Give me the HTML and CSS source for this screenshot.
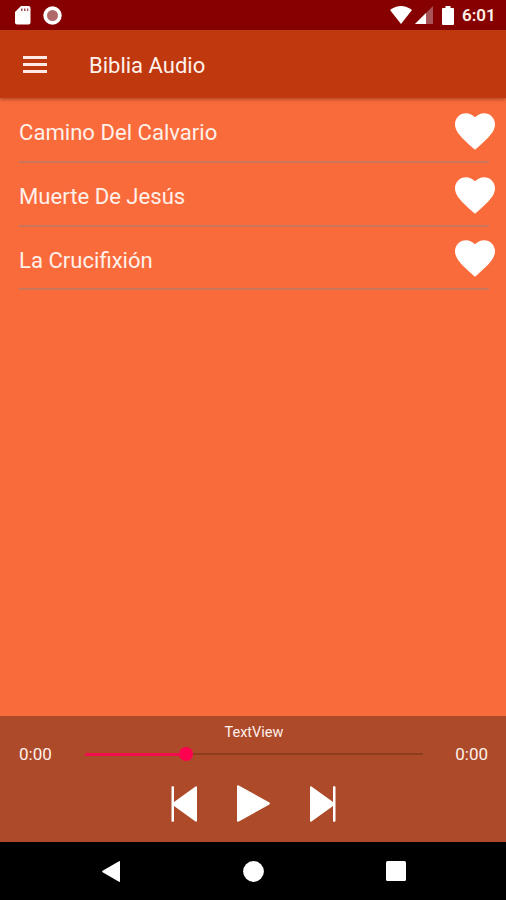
FILE: index.html
```
<!DOCTYPE html>
<html lang="es">
<head>
    <meta charset="UTF-8">
    <meta name="viewport" content="width=device-width, initial-scale=1.0">
    <title>Biblia Audio</title>
    <link rel="stylesheet" href="styles.css">
</head>

<body>
    <div class="status-bar">
        <svg class="sd-card" width="16" height="19" viewBox="0 0 16 19">
            <path fill="#fff" d="M6 0h7.500q2 0 2 2v14.500q0 2-2 2H2q-2 0-2-2V6z"/>
            <path fill="#a04a4a" d="M6 2.500h1.500v2.500H6zM9 2.500h1.500v2.500H9zM12 2.500h1.300v2.500H12z"/>
        </svg>
        <svg class="record" width="19" height="19" viewBox="0 0 19 19">
            <circle cx="9.500" cy="9.500" r="9.200" fill="#fff"/>
            <circle cx="9.500" cy="9.500" r="5.500" fill="#b0686b"/>
        </svg>
        <svg class="wifi" width="22" height="18" viewBox="0 0 22 18">
            <path fill="#fff" d="M0 4Q11-4 22 4L11 18z"/>
        </svg>
        <svg class="signal" width="18" height="18" viewBox="0 0 18 18">
            <path fill="#a85458" d="M18 0v18H0z"/>
            <path fill="#fff" d="M11 7v11H0z"/>
        </svg>
        <svg class="battery" width="12" height="19" viewBox="0 0 12 19">
            <path fill="#fff" d="M3.500 0h5v2H11q1 0 1 1v15q0 1-1 1H1q-1 0-1-1V3q0-1 1-1h2.500z"/>
        </svg>
        <span class="clock">6:01</span>
    </div>

    <header class="toolbar">
        <button class="menu">
            <svg width="24" height="17" viewBox="0 0 24 17">
                <path fill="#ffe9e4" d="M0 0h24v3H0zM0 7h24v3H0zM0 14h24v3H0z"/>
            </svg>
        </button>
        <h1 class="title">Biblia Audio</h1>
    </header>

    <main class="list">
        <div class="song">
            <span class="name">Camino Del Calvario</span>
            <svg class="heart" viewBox="2 3 20 18.35"><path d="M12 21.350l-1.450-1.320C5.400 15.360 2 12.280 2 8.500 2 5.420 4.420 3 7.500 3c1.740 0 3.410.81 4.500 2.090C13.090 3.810 14.760 3 16.500 3 19.580 3 22 5.420 22 8.500c0 3.780-3.400 6.860-8.550 11.540z"/></svg>
        </div>
        <div class="song">
            <span class="name">Muerte De Jesús</span>
            <svg class="heart" viewBox="2 3 20 18.35"><path d="M12 21.350l-1.450-1.320C5.400 15.360 2 12.280 2 8.500 2 5.420 4.420 3 7.500 3c1.740 0 3.410.81 4.500 2.090C13.090 3.810 14.760 3 16.500 3 19.580 3 22 5.420 22 8.500c0 3.780-3.400 6.860-8.550 11.540z"/></svg>
        </div>
        <div class="song">
            <span class="name">La Crucifixión</span>
            <svg class="heart" viewBox="2 3 20 18.35"><path d="M12 21.350l-1.450-1.320C5.400 15.360 2 12.280 2 8.500 2 5.420 4.420 3 7.500 3c1.740 0 3.410.81 4.500 2.090C13.090 3.810 14.760 3 16.500 3 19.580 3 22 5.420 22 8.500c0 3.780-3.400 6.860-8.550 11.540z"/></svg>
        </div>
    </main>

    <section class="player">
        <div class="track-name">TextView</div>
        <div class="progress">
            <span class="time">0:00</span>
            <div class="seekbar">
                <div class="played"></div>
                <div class="thumb"></div>
                <div class="rest"></div>
            </div>
            <span class="time">0:00</span>
        </div>
        <div class="controls">
            <button class="key">
                <svg width="26" height="36" viewBox="0 0 26 36">
                    <path fill="#fff" d="M.5 1q0-.7.700-.7h1.100q.7 0 .7.700v15L24.500.6q1.500-.8 1.500.8v33.200q0 1.600-1.500.8L3 20v15q0 .7-.7.700H1.200q-.7 0-.7-.7z"/>
                </svg>
            </button>
            <button class="key">
                <svg width="33" height="37" viewBox="0 0 33 37">
                    <path fill="#fff" d="M0 1.500Q0-.4 1.800.6L32 17.300q1.800 1.200 0 2.400L1.800 36.400Q0 37.400 0 35.500z"/>
                </svg>
            </button>
            <button class="key">
                <svg width="26" height="36" viewBox="0 0 26 36">
                    <path fill="#fff" d="M25.500 1q0-.7-.7-.7h-1.100q-.7 0-.7.700v15L1.500.6Q0-.2 0 1.400v33.200q0 1.600 1.500.8L23 20v15q0 .7.700.7h1.100q.7 0 .7-.7z"/>
                </svg>
            </button>
        </div>
    </section>

    <nav class="nav-bar">
        <svg width="18" height="21" viewBox="0 0 18 21"><path fill="#fff" d="M17 .3q1-.6 1 .7v19q0 1.300-1 .7L.6 11.200q-1-.7 0-1.400z"/></svg>
        <svg width="21" height="21" viewBox="0 0 21 21"><circle cx="10.500" cy="10.500" r="10.400" fill="#fff"/></svg>
        <svg width="20" height="20" viewBox="0 0 20 20"><rect width="20" height="20" rx="1.500" fill="#fff"/></svg>
    </nav>
</body>
</html>
```

FILE: styles.css
```
*{
    margin: 0;
    padding: 0;
    box-sizing: border-box;
}
body{
    height: 900px;
    display: flex;
    flex-direction: column;
    overflow: hidden;
    font-family: Roboto, sans-serif;
    color: #fff0ea;
    background-color: #fa6b3c;
}
svg{
    display: block;
    flex: none;
}
button{
    border: none;
    background: none;
    cursor: pointer;
}
.status-bar{
    height: 30px;
    flex: none;
    display: flex;
    align-items: center;
    padding: 0 10px 0 15px;
    background-color: #860000;
}
.record{
    margin-left: 12px;
}
.wifi{
    margin-left: auto;
}
.signal{
    margin-left: 3px;
}
.battery{
    margin-left: 9px;
}
.clock{
    width: 34px;
    margin-left: 8px;
    font-size: 17px;
    font-weight: 600;
    white-space: nowrap;
}
.toolbar{
    height: 68px;
    flex: none;
    display: flex;
    align-items: center;
    padding: 2px 0 0 23px;
    background-color: #bf380e;
    box-shadow: 0 1px 4px rgba(90, 40, 10, 0.6);
}
.menu{
    padding-bottom: 1px;
}
.title{
    margin-left: 42px;
    font-size: 22px;
    font-weight: 400;
}
.list{
    flex: 1;
    padding: 1px 17px 0 19px;
}
.song{
    height: 63.8px;
    display: flex;
    align-items: center;
    justify-content: space-between;
    padding-top: 3px;
    border-bottom: 2px solid #c9765c;
}
.name{
    padding-top: 2px;
    font-size: 22.1px;
}
.heart{
    width: 40px;
    height: 37px;
    margin-right: -6px;
    fill: #fff;
}
.player{
    height: 126px;
    flex: none;
    padding-top: 8px;
    background-color: #ad4a2a;
}
.track-name{
    font-size: 14.5px;
    line-height: 18px;
    text-align: center;
    padding-left: 2px;
}
.progress{
    height: 24px;
    display: flex;
    align-items: center;
    justify-content: space-between;
    padding: 0 18px 0 19px;
}
.time{
    font-size: 17px;
}
.seekbar{
    width: 338px;
    display: flex;
    align-items: center;
}
.played{
    width: 94px;
    height: 3px;
    background-color: #f00f4c;
}
.thumb{
    width: 14px;
    height: 14px;
    border-radius: 50%;
    background-color: #ff0050;
}
.rest{
    flex: 1;
    height: 2px;
    background-color: #8e3d1d;
}
.controls{
    height: 75px;
    display: flex;
    align-items: center;
    justify-content: center;
    gap: 40px;
}
.nav-bar{
    height: 58px;
    flex: none;
    display: flex;
    align-items: center;
    justify-content: space-between;
    padding: 0 100px 0 102px;
    background-color: #000;
}
```
